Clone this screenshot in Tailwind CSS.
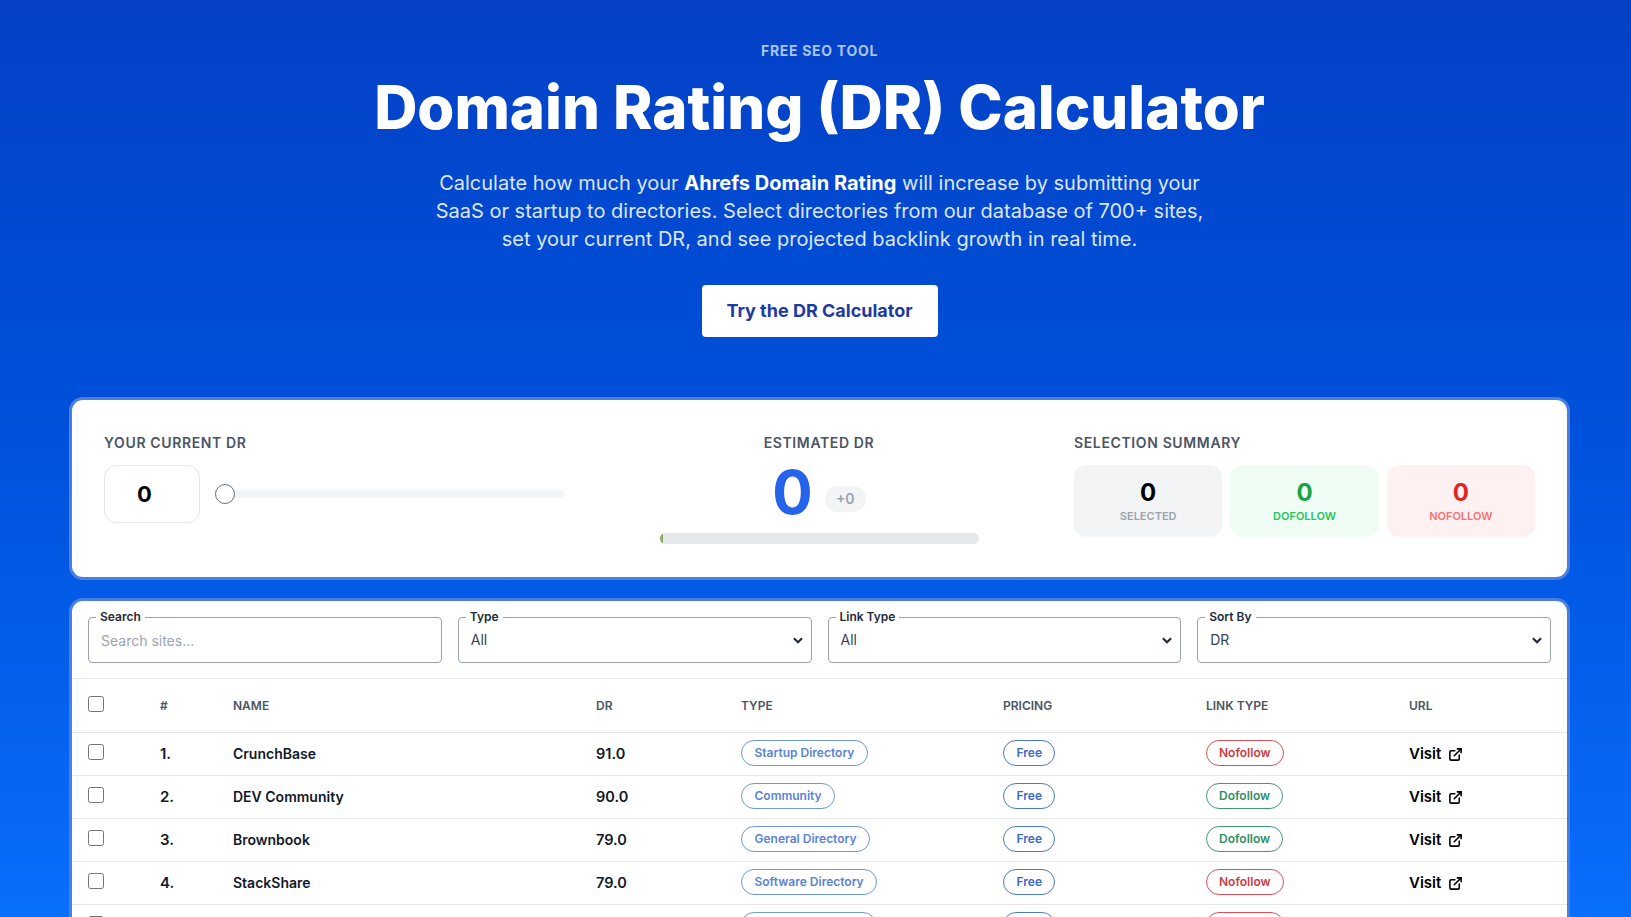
<!DOCTYPE html>
<html lang="en">
<head>
    <meta charset="UTF-8">
    <meta name="viewport" content="width=device-width, initial-scale=1.0">
    <title>Domain Rating (DR) Calculator</title>
    <script src="https://cdn.jsdelivr.net/npm/@tailwindcss/browser@4"></script>
</head>
<body class="h-[917px] overflow-hidden bg-gradient-to-b from-[#0441c6] via-[#0050da] via-[45%] to-[#0a6efc] font-['Inter',sans-serif] text-[#111827]">
    <!-- Hero -->
    <section class="ml-[69px] w-[1501px] pt-[42px] text-center">
        <p class="text-sm leading-[18px] font-bold tracking-[0.05em] text-[#a9c4f5] uppercase">Free SEO Tool</p>
        <h1 class="mt-[12px] text-[59.8px] leading-[70px] font-extrabold text-white">Domain Rating (DR) Calculator</h1>
        <p class="mx-auto mt-[27px] w-[800px] text-xl leading-[28px] text-[#dbe6fb]">
            Calculate how much your <strong class="font-bold text-white">Ahrefs Domain Rating</strong> will increase by submitting your SaaS or startup to directories. Select directories from our database of 700+ sites, set your current DR, and see projected backlink growth in real time.
        </p>
        <button class="mt-[32px] h-[52px] w-[236px] rounded bg-white text-lg font-bold text-[#1e3a9f]">Try the DR Calculator</button>
    </section>

    <!-- Calculator card -->
    <section class="mt-[60px] ml-[69px] flex h-[183px] w-[1501px] rounded-[14px] border-[3px] border-[#4a7fe0] bg-white pt-[33px] pl-[32px]">
        <div class="w-[460px]">
            <h2 class="text-sm leading-[20px] font-semibold tracking-[0.045em] text-[#4b5563] uppercase">Your Current DR</h2>
            <div class="mt-[12px] flex items-center">
                <div class="flex h-[58px] w-[96px] items-center rounded-xl border border-gray-200 pl-[32px] text-[22px] font-bold text-black">0</div>
                <div class="relative ml-[15px] h-[8px] w-[349px] rounded-full bg-[#f3f4f6]">
                    <span class="absolute top-[-6px] left-0 h-[20px] w-[20px] rounded-full border border-gray-500 bg-white"></span>
                </div>
            </div>
        </div>
        <div class="w-[510px] text-center">
            <h2 class="text-sm leading-[20px] font-semibold tracking-[0.045em] text-[#4b5563] uppercase">Estimated DR</h2>
            <div class="mt-[8px] flex h-[62px] items-center justify-center gap-[12px]">
                <span class="text-[60px] leading-[60px] font-bold text-[#2563eb]">0</span>
                <span class="mt-[14px] flex h-[26px] w-[41px] items-center justify-center rounded-full bg-[#f3f4f6] text-sm font-semibold text-[#9ca3af]">+0</span>
            </div>
            <div class="mx-auto mt-[10px] h-[11px] w-[319px] overflow-hidden rounded-full bg-[#e5e7eb]">
                <div class="h-full w-[3px] bg-[#8ea86a]"></div>
            </div>
        </div>
        <div class="w-[461px]">
            <h2 class="text-sm leading-[20px] font-semibold tracking-[0.045em] text-[#4b5563] uppercase">Selection Summary</h2>
            <div class="mt-[12px] grid grid-cols-3 gap-[8px]">
                <div class="flex h-[72px] flex-col items-center justify-center rounded-xl bg-[#f3f4f6]">
                    <span class="text-2xl leading-[30px] font-bold text-black">0</span>
                    <span class="text-[11px] font-semibold text-[#9ca3af] uppercase">Selected</span>
                </div>
                <div class="flex h-[72px] flex-col items-center justify-center rounded-xl bg-[#effdf4]">
                    <span class="text-2xl leading-[30px] font-bold text-[#16a34a]">0</span>
                    <span class="text-[11px] font-semibold text-[#22c55e] uppercase">Dofollow</span>
                </div>
                <div class="flex h-[72px] flex-col items-center justify-center rounded-xl bg-[#fef1f1]">
                    <span class="text-2xl leading-[30px] font-bold text-[#dc2626]">0</span>
                    <span class="text-[11px] font-semibold text-[#f87171] uppercase">Nofollow</span>
                </div>
            </div>
        </div>
    </section>

    <!-- Directory table card -->
    <section class="mt-[18px] ml-[69px] w-[1501px] rounded-t-[14px] border-x-[3px] border-t-[3px] border-[#4a7fe0] bg-white">
        <div class="grid grid-cols-4 gap-[16px] border-b border-gray-200 px-[16px] pt-[16px] pb-[15px]">
            <div class="relative">
                <span class="absolute top-[-8px] left-[8px] bg-white px-[4px] text-xs leading-[16px] font-semibold text-[#1f2937]">Search</span>
                <input class="h-[46px] w-full rounded border border-gray-400 px-[12px] text-sm placeholder:text-[#9ca3af]" placeholder="Search sites...">
            </div>
            <div class="relative">
                <span class="absolute top-[-8px] left-[8px] bg-white px-[4px] text-xs leading-[16px] font-semibold text-[#1f2937]">Type</span>
                <div class="flex h-[46px] items-center justify-between rounded border border-gray-400 pr-[6px] pl-[12px] text-sm text-[#374151]">All
                    <svg class="h-[14px] w-[14px]" viewBox="0 0 24 24" fill="none" stroke="#1f2937" stroke-width="3.5"><path d="m5 9 7 7 7-7"/></svg>
                </div>
            </div>
            <div class="relative">
                <span class="absolute top-[-8px] left-[8px] bg-white px-[4px] text-xs leading-[16px] font-semibold text-[#1f2937]">Link Type</span>
                <div class="flex h-[46px] items-center justify-between rounded border border-gray-400 pr-[6px] pl-[12px] text-sm text-[#374151]">All
                    <svg class="h-[14px] w-[14px]" viewBox="0 0 24 24" fill="none" stroke="#1f2937" stroke-width="3.5"><path d="m5 9 7 7 7-7"/></svg>
                </div>
            </div>
            <div class="relative">
                <span class="absolute top-[-8px] left-[8px] bg-white px-[4px] text-xs leading-[16px] font-semibold text-[#1f2937]">Sort By</span>
                <div class="flex h-[46px] items-center justify-between rounded border border-gray-400 pr-[6px] pl-[12px] text-sm text-[#374151]">DR
                    <svg class="h-[14px] w-[14px]" viewBox="0 0 24 24" fill="none" stroke="#1f2937" stroke-width="3.5"><path d="m5 9 7 7 7-7"/></svg>
                </div>
            </div>
        </div>

        <table class="w-full table-fixed text-left">
            <thead>
                <tr class="h-[53px] border-b border-gray-200 text-xs font-semibold text-[#4b5563] uppercase">
                    <th class="w-[72px] pl-[16px]"><input type="checkbox" class="mb-[3px] block h-[16px] w-[16px]"></th>
                    <th class="w-[73px] pt-[2px] pl-[16px] font-semibold">#</th>
                    <th class="w-[363px] pt-[2px] pl-[16px] font-semibold">Name</th>
                    <th class="w-[145px] pt-[2px] pl-[16px] font-semibold">DR</th>
                    <th class="w-[262px] pt-[2px] pl-[16px] font-semibold">Type</th>
                    <th class="w-[203px] pt-[2px] pl-[16px] font-semibold">Pricing</th>
                    <th class="w-[203px] pt-[2px] pl-[16px] font-semibold">Link Type</th>
                    <th class="pt-[2px] pl-[16px] font-semibold">URL</th>
                </tr>
            </thead>
            <tbody class="text-[15px] font-semibold">
                <tr class="h-[43px] border-b border-gray-200">
                    <td class="pl-[16px]"><input type="checkbox" class="mb-[3px] block h-[16px] w-[16px]"></td>
                    <td class="pt-[2px] pl-[16px]">1.</td>
                    <td class="pl-[16px] text-sm">CrunchBase</td>
                    <td class="pl-[16px] text-[14.5px]">91.0</td>
                    <td class="pb-[1px] pl-[16px]"><span class="inline-flex h-[26px] items-center rounded-full border border-[#6f97dd] px-[12.5px] align-middle text-xs text-[#5b82d8]">Startup Directory</span></td>
                    <td class="pb-[1px] pl-[16px]"><span class="inline-flex h-[26px] items-center rounded-full border border-[#4d79c9] px-[12.5px] align-middle text-xs text-[#3d68cc]">Free</span></td>
                    <td class="pb-[1px] pl-[16px]"><span class="inline-flex h-[26px] items-center rounded-full border border-[#d9505a] px-[12px] align-middle text-xs text-[#d03a42]">Nofollow</span></td>
                    <td class="pt-[2px] pl-[16px]"><a class="inline-flex items-center gap-[7px] text-black">Visit <svg class="h-[15px] w-[15px]" viewBox="0 0 24 24" fill="none" stroke="currentColor" stroke-width="2.5" stroke-linecap="round" stroke-linejoin="round"><path d="M18 13v6a2 2 0 0 1-2 2H5a2 2 0 0 1-2-2V8a2 2 0 0 1 2-2h6"/><path d="M15 3h6v6"/><path d="M10 14 21 3"/></svg></a></td>
                </tr>
                <tr class="h-[43px] border-b border-gray-200">
                    <td class="pl-[16px]"><input type="checkbox" class="mb-[3px] block h-[16px] w-[16px]"></td>
                    <td class="pt-[2px] pl-[16px]">2.</td>
                    <td class="pl-[16px] text-sm">DEV Community</td>
                    <td class="pl-[16px] text-[14.5px]">90.0</td>
                    <td class="pb-[1px] pl-[16px]"><span class="inline-flex h-[26px] items-center rounded-full border border-[#6f97dd] px-[12.5px] align-middle text-xs text-[#5b82d8]">Community</span></td>
                    <td class="pb-[1px] pl-[16px]"><span class="inline-flex h-[26px] items-center rounded-full border border-[#4d79c9] px-[12.5px] align-middle text-xs text-[#3d68cc]">Free</span></td>
                    <td class="pb-[1px] pl-[16px]"><span class="inline-flex h-[26px] items-center rounded-full border border-[#3f9a72] px-[12px] align-middle text-xs text-[#2f8f64]">Dofollow</span></td>
                    <td class="pt-[2px] pl-[16px]"><a class="inline-flex items-center gap-[7px] text-black">Visit <svg class="h-[15px] w-[15px]" viewBox="0 0 24 24" fill="none" stroke="currentColor" stroke-width="2.5" stroke-linecap="round" stroke-linejoin="round"><path d="M18 13v6a2 2 0 0 1-2 2H5a2 2 0 0 1-2-2V8a2 2 0 0 1 2-2h6"/><path d="M15 3h6v6"/><path d="M10 14 21 3"/></svg></a></td>
                </tr>
                <tr class="h-[43px] border-b border-gray-200">
                    <td class="pl-[16px]"><input type="checkbox" class="mb-[3px] block h-[16px] w-[16px]"></td>
                    <td class="pt-[2px] pl-[16px]">3.</td>
                    <td class="pl-[16px] text-sm">Brownbook</td>
                    <td class="pl-[16px] text-[14.5px]">79.0</td>
                    <td class="pb-[1px] pl-[16px]"><span class="inline-flex h-[26px] items-center rounded-full border border-[#6f97dd] px-[12.5px] align-middle text-xs text-[#5b82d8]">General Directory</span></td>
                    <td class="pb-[1px] pl-[16px]"><span class="inline-flex h-[26px] items-center rounded-full border border-[#4d79c9] px-[12.5px] align-middle text-xs text-[#3d68cc]">Free</span></td>
                    <td class="pb-[1px] pl-[16px]"><span class="inline-flex h-[26px] items-center rounded-full border border-[#3f9a72] px-[12px] align-middle text-xs text-[#2f8f64]">Dofollow</span></td>
                    <td class="pt-[2px] pl-[16px]"><a class="inline-flex items-center gap-[7px] text-black">Visit <svg class="h-[15px] w-[15px]" viewBox="0 0 24 24" fill="none" stroke="currentColor" stroke-width="2.5" stroke-linecap="round" stroke-linejoin="round"><path d="M18 13v6a2 2 0 0 1-2 2H5a2 2 0 0 1-2-2V8a2 2 0 0 1 2-2h6"/><path d="M15 3h6v6"/><path d="M10 14 21 3"/></svg></a></td>
                </tr>
                <tr class="h-[43px] border-b border-gray-200">
                    <td class="pl-[16px]"><input type="checkbox" class="mb-[3px] block h-[16px] w-[16px]"></td>
                    <td class="pt-[2px] pl-[16px]">4.</td>
                    <td class="pl-[16px] text-sm">StackShare</td>
                    <td class="pl-[16px] text-[14.5px]">79.0</td>
                    <td class="pb-[1px] pl-[16px]"><span class="inline-flex h-[26px] items-center rounded-full border border-[#6f97dd] px-[12.5px] align-middle text-xs text-[#5b82d8]">Software Directory</span></td>
                    <td class="pb-[1px] pl-[16px]"><span class="inline-flex h-[26px] items-center rounded-full border border-[#4d79c9] px-[12.5px] align-middle text-xs text-[#3d68cc]">Free</span></td>
                    <td class="pb-[1px] pl-[16px]"><span class="inline-flex h-[26px] items-center rounded-full border border-[#d9505a] px-[12px] align-middle text-xs text-[#d03a42]">Nofollow</span></td>
                    <td class="pt-[2px] pl-[16px]"><a class="inline-flex items-center gap-[7px] text-black">Visit <svg class="h-[15px] w-[15px]" viewBox="0 0 24 24" fill="none" stroke="currentColor" stroke-width="2.5" stroke-linecap="round" stroke-linejoin="round"><path d="M18 13v6a2 2 0 0 1-2 2H5a2 2 0 0 1-2-2V8a2 2 0 0 1 2-2h6"/><path d="M15 3h6v6"/><path d="M10 14 21 3"/></svg></a></td>
                </tr>
                <!-- row 5 runs off the bottom of the window, only the tops show -->
                <tr class="h-[43px]">
                    <td class="pl-[16px]"><input type="checkbox" class="mb-[3px] block h-[16px] w-[16px]"></td>
                    <td></td>
                    <td></td>
                    <td></td>
                    <td class="pb-[1px] pl-[16px]"><span class="inline-block h-[26px] w-[135px] rounded-full border border-[#6f97dd] align-middle"></span></td>
                    <td class="pb-[1px] pl-[16px]"><span class="inline-block h-[26px] w-[52px] rounded-full border border-[#4d79c9] align-middle"></span></td>
                    <td class="pb-[1px] pl-[16px]"><span class="inline-block h-[26px] w-[78px] rounded-full border border-[#d9505a] align-middle"></span></td>
                    <td></td>
                </tr>
            </tbody>
        </table>
    </section>
</body>
</html>
